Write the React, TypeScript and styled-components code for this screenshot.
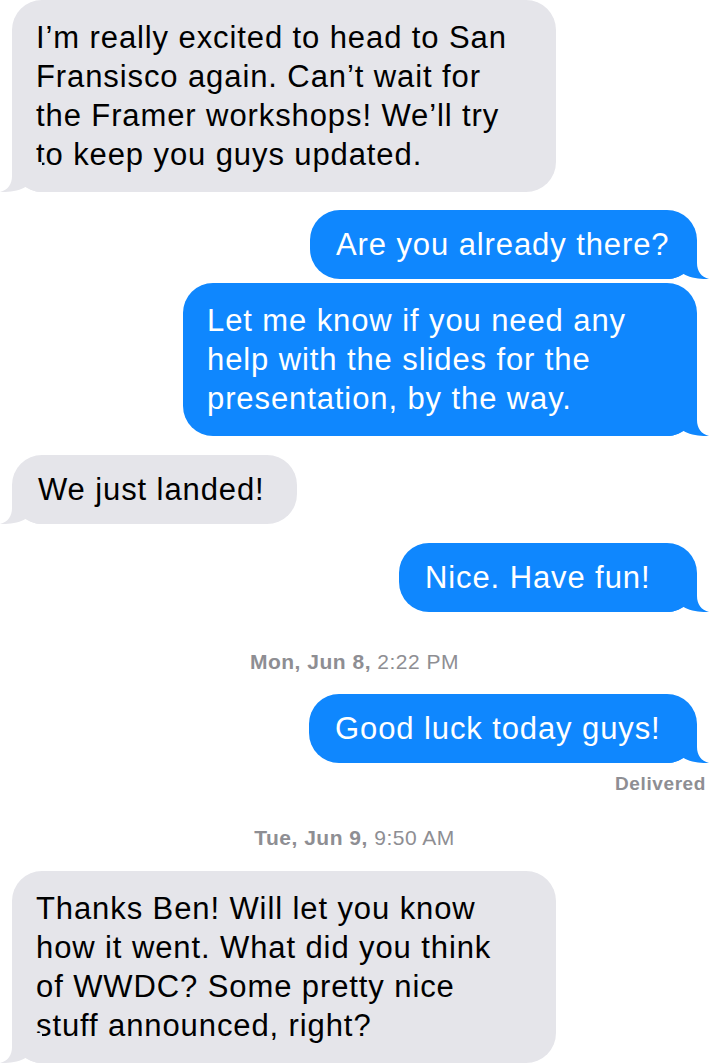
import React from "react";
import styled, { createGlobalStyle } from "styled-components";

const Global = createGlobalStyle`
  html, body { margin: 0; padding: 0; background: #ffffff; }
  body { font-family: "Liberation Sans", Arial, sans-serif; overflow: hidden; }
`;

const Thread = styled.div`
  width: 710px;
  box-sizing: border-box;
  padding: 0 13px 0 12px;
  display: flex;
  flex-direction: column;
`;

const Bubble = styled.div<{ $me?: boolean; $top: number; $multi?: boolean; $w: number }>`
  position: relative;
  align-self: ${(p) => (p.$me ? "flex-end" : "flex-start")};
  margin-top: ${(p) => p.$top}px;
  width: ${(p) => p.$w}px;
  box-sizing: border-box;
  padding: ${(p) => (p.$multi ? "18px 0 18px 24px" : "15px 0 15px 26px")};
  border-radius: 30px;
  background: ${(p) => (p.$me ? "#0f87fe" : "#e5e5ea")};
  color: ${(p) => (p.$me ? "#ffffff" : "#000000")};
  font-size: 31px;
  letter-spacing: 0.9px;
  line-height: 39px;
  white-space: nowrap;
`;

const Tail = styled.svg<{ $me?: boolean }>`
  position: absolute;
  bottom: 0;
  width: 42px;
  height: 30px;
  ${(p) => (p.$me ? "right: -12px;" : "left: -12px; transform: scaleX(-1);")}
`;

const Stamp = styled.div<{ $top: number }>`
  margin-top: ${(p) => p.$top}px;
  align-self: center;
  font-size: 21px;
  letter-spacing: 0.5px;
  line-height: 24px;
  color: #8e8e93;
  b { font-weight: 700; }
`;

const Status = styled.div`
  margin-top: 10px;
  margin-right: -9px;
  align-self: flex-end;
  font-size: 19px;
  letter-spacing: 0.6px;
  line-height: 22px;
  font-weight: 700;
  color: #8e8e93;
`;

type Msg = { me?: boolean; top: number; w: number; lines: string[] };

function Message({ me, top, w, lines }: Msg) {
  const fill = me ? "#0f87fe" : "#e5e5ea";
  return (
    <Bubble $me={me} $top={top} $w={w} $multi={lines.length > 1}>
      {lines.map((l, i) => (
        <React.Fragment key={i}>
          {i > 0 && <br />}
          {l}
        </React.Fragment>
      ))}
      <Tail $me={me} viewBox="0 0 42 30">
        <path
          d="M0 0 L30 0 L30 14 C30 22 34 28 42 30 C36 30.5 22 29 16 24.5 C12 28 6 30 0 30 Z"
          fill={fill}
        />
      </Tail>
    </Bubble>
  );
}

export default function App() {
  return (
    <>
      <Global />
      <Thread>
        <Message
          top={0}
          w={544}
          lines={[
            "I’m really excited to head to San",
            "Fransisco again. Can’t wait for",
            "the Framer workshops! We’ll try",
            "to keep you guys updated.",
          ]}
        />
        <Message me top={18} w={387} lines={["Are you already there?"]} />
        <Message
          me
          top={4}
          w={514}
          lines={[
            "Let me know if you need any",
            "help with the slides for the",
            "presentation, by the way.",
          ]}
        />
        <Message top={19} w={285} lines={["We just landed!"]} />
        <Message me top={19} w={298} lines={["Nice. Have fun!"]} />
        <Stamp $top={38}>
          <b>Mon, Jun 8,</b> 2:22 PM
        </Stamp>
        <Message me top={20} w={388} lines={["Good luck today guys!"]} />
        <Status>Delivered</Status>
        <Stamp $top={31}>
          <b>Tue, Jun 9,</b> 9:50 AM
        </Stamp>
        <Message
          top={21}
          w={544}
          lines={[
            "Thanks Ben! Will let you know",
            "how it went. What did you think",
            "of WWDC? Some pretty nice",
            "stuff announced, right?",
          ]}
        />
      </Thread>
    </>
  );
}
